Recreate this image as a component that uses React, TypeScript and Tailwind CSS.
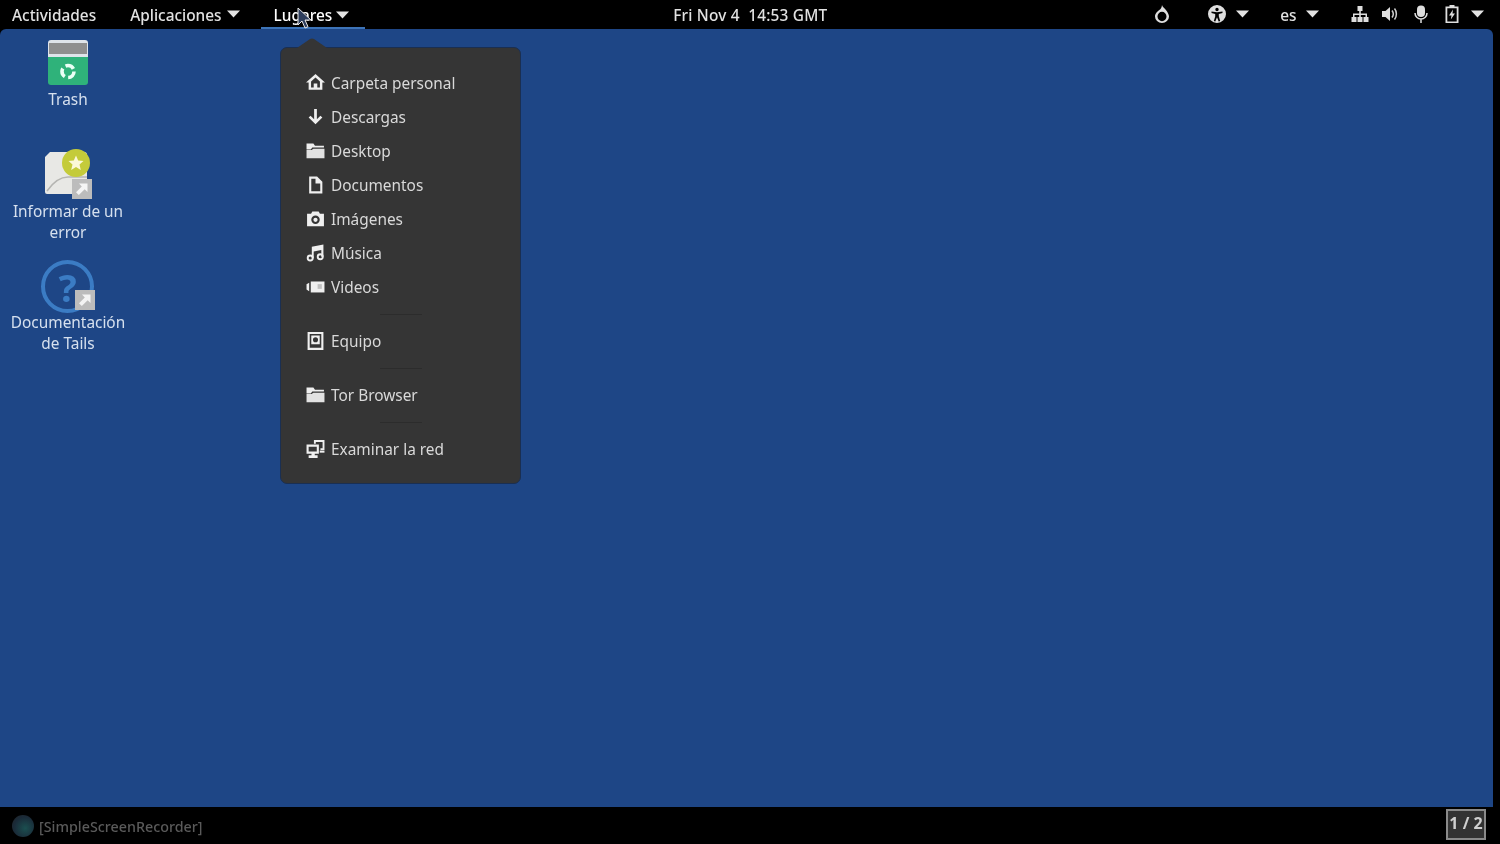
import React from "react";

const Caret = ({ className = "" }: { className?: string }) => (
  <svg width="13" height="8" viewBox="0 0 13 8" className={className}>
    <path d="M0 0.500h13L6.500 7.500z" fill="#e4e4e4" />
  </svg>
);

const I = ({ children }: { children: React.ReactNode }) => (
  <svg width="19" height="19" viewBox="0 0 18 18" className="shrink-0" fill="#efefef">
    {children}
  </svg>
);

const Home = () => (
  <I>
    <path fillRule="evenodd" d="M9 0 18 8h-2.500v7H2.500V8H0zM4.800 7v5.800h2.500V9h3.400v3.800h2.500V7L9 3.200z" />
  </I>
);
const Down = () => (
  <I>
    <path d="M7.700 1h2.600v9.700l3.400-3.400 1.800 1.800L9 15.500 2.500 9.100l1.800-1.800 3.400 3.400z" />
  </I>
);
const Folder = () => (
  <I>
    <path d="M0.500 1.500h6.500l1.500 2H17v1.800H6L4.500 7H0.500z" />
    <path d="M0.500 7.500h4.800L7 6.300h10.500V15.500H0.500z" fill="#e2e2e2" />
  </I>
);
const Doc = () => (
  <I>
    <path fillRule="evenodd" d="M3 0.500h7.500L15.500 5.500v11H3zM5 2.500v12h8.500V7H9V2.500z" />
  </I>
);
const Camera = () => (
  <I>
    <path fillRule="evenodd" d="M6 1.500h6l1.200 2H17v12H1v-12h3.800zM9 5.300a4 4 0 1 0 0 8 4 4 0 0 0 0-8z" />
    <circle cx="9" cy="9.300" r="2" />
  </I>
);
const Music = () => (
  <I>
    <path d="M5.500 2.500 16.500.5V12h-2V5.700L7.300 7.100v6.400H5.500z" />
    <path fillRule="evenodd" d="M4 10a3.300 3.300 0 1 0 0 6.600A3.300 3.300 0 0 0 4 10zm0 1.800a1.500 1.500 0 1 1 0 3 1.500 1.500 0 0 1 0-3zM13.500 8.800a3.300 3.300 0 1 0 0 6.600 3.300 3.300 0 0 0 0-6.600zm0 1.800a1.500 1.500 0 1 1 0 3 1.500 1.500 0 0 1 0-3z" />
  </I>
);
const Video = () => (
  <I>
    <path d="M0.500 6 3 4.500v8L0.500 11z" />
    <path d="M4.500 3.300h13v10.400h-13z" />
    <path d="M11 5.800h4v4.500h-4z" fill="#c0c0c0" />
  </I>
);
const Computer = () => (
  <I>
    <path fillRule="evenodd" d="M1.500 0h15v17h-15zM3.500 2v13h11V2z" />
    <path fillRule="evenodd" d="M5 3.300h8v8.200H5zM9 5a2.400 2.400 0 1 0 0 4.800A2.400 2.400 0 0 0 9 5z" />
  </I>
);
const Network = () => (
  <I>
    <path fillRule="evenodd" d="M7.500 0h10v9.500h-3.800V7.800h2V1.800H9.300V3.500H7.500z" />
    <path fillRule="evenodd" d="M0.500 4.300h11.700V13H8.300v1.500h2.700V17H2.500v-2.500h2.700V13H0.500zM2.500 6.300V11h7.700V6.300z" />
    <path d="M13 10h4.500v2H13z" />
  </I>
);

const Row = ({ icon, label }: { icon: React.ReactNode; label: string }) => (
  <div className="flex h-[34px] items-center gap-[6px] pl-[25px] text-[15.4px] text-[#d9d9d9]">
    {icon}
    <span className="pt-[2px]">{label}</span>
  </div>
);

const Sep = () => (
  <div className="flex h-[20px] items-center justify-center">
    <div className="h-px w-[42px] bg-[#2c2c2c]" />
  </div>
);

const PanelSvg = ({ w, children }: { w: number; children: React.ReactNode }) => (
  <svg width={w} height="18" viewBox={`0 0 ${w} 18`} fill="#dedede" className="shrink-0">
    {children}
  </svg>
);

const Shortcut = () => (
  <div className="absolute bottom-0 right-0 flex h-[20px] w-[20px] items-center justify-center bg-[#bcbcbc]">
    <svg width="14" height="14" viewBox="0 0 14 14">
      <path d="M4 1.500h8.500V10L9.700 7.300 3.800 13 1 10.300 6.800 4.400z" fill="#f4f4f4" />
    </svg>
  </div>
);

const DesktopItem = ({
  icon,
  lines,
  className,
}: {
  icon: React.ReactNode;
  lines: string[];
  className: string;
}) => (
  <div className={`flex w-[136px] flex-col items-center text-center text-[15.4px] leading-[21px] text-[#d6e0ee] ${className}`}>
    {icon}
    {lines.map((l) => (
      <div key={l}>{l}</div>
    ))}
  </div>
);

export default function App() {
  return (
    <div className="relative flex h-[844px] w-[1500px] flex-col overflow-hidden bg-black blur-[0.4px] font-['Noto_Sans','Open_Sans',sans-serif]">
      {/* top panel */}
      <header className="flex h-[29px] shrink-0 items-center text-[15.4px] text-[#e2e2e2]">
        <span className="ml-[12px] pt-[2px] font-medium">Actividades</span>
        <span className="ml-[34px] flex items-center gap-[5px] font-medium">
          <span className="pt-[2px]">Aplicaciones</span> <Caret />
        </span>
        <span className="relative ml-[34px] flex h-full items-center gap-[4px] font-medium text-white">
          <span className="pt-[2px]">Lugares</span> <Caret />
          <span className="absolute -left-[13px] -right-[16px] bottom-0 h-[2px] bg-[#3d74b8]" />
        </span>
        <span className="ml-[323px] w-[156px] pt-[2px] text-center font-medium tracking-[0.2px] whitespace-nowrap">Fri Nov 4&nbsp; 14:53 GMT</span>
        <div className="ml-[325px] flex items-center">
          <PanelSvg w={18}>
            <path fillRule="evenodd" d="M9 0c.4 2 2 2.500 3.500 4.500C14.500 7 16 9.500 16 11.500a7 6.500 0 0 1-14 0c0-3.500 3-5.500 5-7C8 3.700 8.800 2 9 0zM9 6.800a4.500 4.700 0 1 0 0 9.400 4.500 4.700 0 0 0 0-9.400z" />
          </PanelSvg>
          <span className="ml-[37px]">
            <PanelSvg w={18}>
              <path fillRule="evenodd" d="M9 0a9 9 0 1 1 0 18A9 9 0 0 1 9 0zm0 2.800a1.700 1.700 0 1 0 0 3.400 1.700 1.700 0 0 0 0-3.400zM3.500 6.500v1.600l3.700.9v2.400L5.800 16l1.500.5L9 12.300l1.700 4.200 1.500-.5-1.400-4.800V9l3.700-.9V6.500L9 7.300z" />
            </PanelSvg>
          </span>
          <Caret className="ml-[10px]" />
          <span className="ml-[31px] pt-[2px] font-medium">es</span>
          <Caret className="ml-[9px]" />
          <span className="ml-[32px]">
            <PanelSvg w={18}>
              <path d="M6.500 1h5v5h-1.700v2.500H16V12h1.500v5h-5v-5H14.500V10H9.800v2H11.500v5h-5v-5h1.700v-2H3.500v2H5.500v5h-5v-5H2V8.500h6.200V6H6.500z" />
            </PanelSvg>
          </span>
          <span className="ml-[12px]">
            <PanelSvg w={18}>
              <path d="M1 6h3.500L9 2v14l-4.500-4H1z" />
              <path d="M11 5.500c1.500 2 1.500 5 0 7M13.500 3.500c2.500 3 2.500 8 0 11" fill="none" stroke="#cfcfcf" strokeWidth="1.500" />
            </PanelSvg>
          </span>
          <span className="ml-[13px]">
            <PanelSvg w={18}>
              <rect x="5" y="0.500" width="8" height="11.500" rx="4" />
              <path d="M3 8a6 6 0 0 0 12 0M9 14V18" fill="none" stroke="#dedede" strokeWidth="1.500" />
            </PanelSvg>
          </span>
          <span className="ml-[13px]">
            <PanelSvg w={18}>
              <path fillRule="evenodd" d="M6.500 0h5v1.500H15.500V18H2.500V1.500h4zM4.300 3.200v13.200h9.400V3.200z" />
              <path d="M10 4.500 6 10.500h2.500L7.800 14.500l4.200-6H9.500z" />
            </PanelSvg>
          </span>
          <Caret className="ml-[10px]" />
        </div>
      </header>

      {/* desktop row */}
      <div className="flex min-h-0 flex-1">
        <main className="relative w-[1493px] rounded-t-[6px] bg-[#1e4686]">
          <DesktopItem
            className="pt-[11px]"
            lines={["Trash"]}
            icon={
              <div className="mb-[4px] flex h-[45px] w-[40px] flex-col">
                <div className="flex h-[17px] items-center rounded-t-[3px] bg-[#dfe4ea] px-[1px]">
                  <div className="h-[11px] w-full bg-[#8f8f8f]" />
                </div>
                <div className="flex flex-1 items-center justify-center rounded-b-[3px] bg-[#2fb27a]">
                  <svg width="20" height="20" viewBox="0 0 20 20" fill="none" stroke="#eafff5" strokeWidth="3.600">
                    <circle cx="10" cy="10.500" r="6" strokeDasharray="9 3.500" />
                  </svg>
                </div>
              </div>
            }
          />
          <DesktopItem
            className="mt-[39px]"
            lines={["Informar de un", "error"]}
            icon={
              <div className="relative mb-[2px] h-[50px] w-[48px]">
                <svg width="46" height="46" viewBox="0 0 46 46" className="absolute left-0 top-[2px]">
                  <path d="M6 1h34a3 3 0 0 1 3 3v39H3a2 2 0 0 1-2-2V6z" fill="#e8e8e5" />
                  <path d="M3 40C10 30 16 26 24 26h19" fill="none" stroke="#b5b5b2" strokeWidth="1.500" />
                </svg>
                <div className="absolute right-[2px] top-0 flex h-[28px] w-[28px] items-center justify-center rounded-full bg-[#c4cb3a]">
                  <svg width="18" height="18" viewBox="0 0 18 18">
                    <path d="M9 1.500 11.200 6.500 16.500 7 12.500 10.500 13.800 16 9 13.100 4.200 16 5.500 10.500 1.500 7 6.800 6.500z" fill="#fbf8d8" />
                  </svg>
                </div>
                <Shortcut />
              </div>
            }
          />
          <DesktopItem
            className="mt-[17px]"
            lines={["Documentación", "de Tails"]}
            icon={
              <div className="relative mb-[2px] h-[50px] w-[54px]">
                <div className="absolute left-0 top-0 flex h-[53px] w-[53px] items-center justify-center rounded-full border-[4px] border-[#3b7cc4] text-[38px] leading-none font-bold text-[#3b7cc4]">
                  ?
                </div>
                <Shortcut />
              </div>
            }
          />

          {/* menu */}
          <div className="absolute left-[280px] top-[18px] w-[241px]">
            <svg width="30" height="10" viewBox="0 0 30 10" className="absolute left-[17px] -top-[9px]">
              <path d="M0 10 13 1Q15 0 17 1L30 10z" fill="#353535" />
            </svg>
            <div className="h-[437px] rounded-[7px] border border-[#1a2f52] bg-[#353535] pt-[18px]">
              <Row icon={<Home />} label="Carpeta personal" />
              <Row icon={<Down />} label="Descargas" />
              <Row icon={<Folder />} label="Desktop" />
              <Row icon={<Doc />} label="Documentos" />
              <Row icon={<Camera />} label="Imágenes" />
              <Row icon={<Music />} label="Música" />
              <Row icon={<Video />} label="Videos" />
              <Sep />
              <Row icon={<Computer />} label="Equipo" />
              <Sep />
              <Row icon={<Folder />} label="Tor Browser" />
              <Sep />
              <Row icon={<Network />} label="Examinar la red" />
            </div>
          </div>
        </main>
      </div>

      {/* bottom panel */}
      <footer className="flex h-[37px] shrink-0 items-center text-[14.3px] font-medium text-[#5a5a5a]">
        <div className="ml-[12px] h-[22px] w-[22px] rounded-full bg-[radial-gradient(circle_at_60%_60%,#1b4f50,#1a2a38_60%,#222)]" />
        <span className="ml-[5px] pt-[2px]">[SimpleScreenRecorder]</span>
        <div className="mb-[2px] ml-auto mr-[14px] flex h-[31px] w-[40px] items-center justify-center border-2 border-[#8a8a8a] bg-[#333] pb-[4px] text-[16px] font-bold whitespace-nowrap text-[#cfcfcf]">
          1 / 2
        </div>
      </footer>

      {/* pointer */}
      <svg width="16" height="24" viewBox="0 0 16 24" className="absolute left-[297px] top-[7px]">
        <path d="M1 1v17l4-4 3 7 3-1.300-3-6.700h6z" fill="#2d3d5c" stroke="#e8e8e8" strokeWidth="1" />
      </svg>
    </div>
  );
}
